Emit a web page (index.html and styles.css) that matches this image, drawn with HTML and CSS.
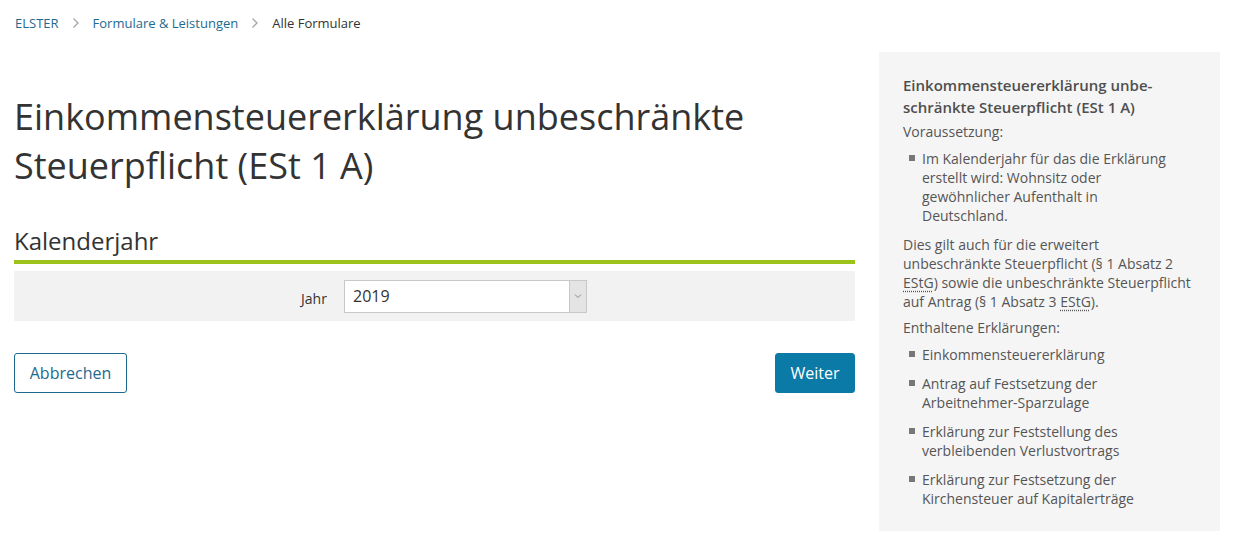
FILE: index.html
```html
<!DOCTYPE html>
<html lang="de">
<head>
<meta charset="utf-8">
<title>Einkommensteuererklärung unbeschränkte Steuerpflicht (ESt 1 A)</title>
<link rel="stylesheet" href="styles.css">
</head>
<body>
<div class="page">
  <nav class="breadcrumb">
    <a href="#" class="crumb-link">ELSTER</a>
    <span class="sep"><svg width="8" height="12" viewBox="0 0 8 12"><path d="M1.5 1.5 L6 6 L1.5 10.5" fill="none" stroke="#a6a6a6" stroke-width="1.3"/></svg></span>
    <a href="#" class="crumb-link">Formulare &amp; Leistungen</a>
    <span class="sep"><svg width="8" height="12" viewBox="0 0 8 12"><path d="M1.5 1.5 L6 6 L1.5 10.5" fill="none" stroke="#a6a6a6" stroke-width="1.3"/></svg></span>
    <span class="crumb-current">Alle Formulare</span>
  </nav>
  <div class="layout">
    <main class="main">
      <h1 class="title">Einkommensteuererklärung unbeschränkte Steuerpflicht (ESt 1 A)</h1>
      <h2 class="section-title">Kalenderjahr</h2>
      <div class="field-row">
        <label class="field-label">Jahr</label>
        <div class="select">
          <span class="select-value">2019</span>
          <span class="select-arrow"><svg width="8" height="6" viewBox="0 0 8 6"><path d="M1 1.5 L4 4.5 L7 1.5" fill="none" stroke="#8a8a8a" stroke-width="1"/></svg></span>
        </div>
      </div>
      <div class="actions">
        <button class="btn btn-secondary">Abbrechen</button>
        <button class="btn btn-primary">Weiter</button>
      </div>
    </main>
    <aside class="sidebar">
      <h3 class="side-title">Einkommensteuererklärung unbe&shy;schränkte Steuerpflicht (ESt 1 A)</h3>
      <p class="side-text">Voraussetzung:</p>
      <ul class="side-list">
        <li>Im Kalenderjahr für das die Erklärung erstellt wird: Wohnsitz oder gewöhnlicher Aufenthalt in Deutschland.</li>
      </ul>
      <p class="side-text para">Dies gilt auch für die erweitert unbeschränkte Steuerpflicht (§ 1 Absatz 2 <abbr>EStG</abbr>) sowie die unbeschränkte Steuerpflicht auf Antrag (§ 1 Absatz 3 <abbr>EStG</abbr>).</p>
      <p class="side-text">Enthaltene Erklärungen:</p>
      <ul class="side-list">
        <li>Einkommensteuererklärung</li>
        <li>Antrag auf Festsetzung der Arbeitnehmer-Sparzulage</li>
        <li>Erklärung zur Feststellung des verbleibenden Verlustvortrags</li>
        <li>Erklärung zur Festsetzung der Kirchensteuer auf Kapitalerträge</li>
      </ul>
    </aside>
  </div>
</div>
</body>
</html>
```

FILE: styles.css
```css
* { box-sizing: border-box; }
html, body { margin: 0; padding: 0; background: #fff; }
body {
  font-family: "Open Sans", "Liberation Sans", sans-serif;
  color: #333;
}
.page { padding: 0 16px 0 14px; }

.breadcrumb {
  display: flex;
  align-items: center;
  height: 46px;
  font-size: 13px;
  padding-left: 1px;
}
.crumb-link { color: #1e6a8f; text-decoration: none; }
.crumb-current { color: #333; }
.sep { display: inline-flex; margin: 0 13px 0 13px; }

.layout {
  display: grid;
  grid-template-columns: 841px 341px;
  column-gap: 24px;
  align-items: start;
}

.title {
  font-size: 36px;
  font-weight: 400;
  line-height: 49px;
  margin: 46px 0 0;
  color: #333;
}
.section-title {
  font-size: 24px;
  font-weight: 400;
  margin: 35px 0 0;
  line-height: 32px;
  padding-bottom: 3px;
  border-bottom: 4px solid #9bc31c;
  color: #333;
}
.field-row {
  margin-top: 7px;
  background: #f2f2f2;
  height: 50px;
  display: flex;
  align-items: center;
  padding-left: 287px;
}
.field-label { font-size: 14px; width: 43px; padding-top: 4px; color: #333; }
.select {
  width: 243px;
  height: 33px;
  background: #fff;
  border: 1px solid #c8c8c8;
  display: flex;
  align-items: stretch;
}
.select-value { flex: 1; font-size: 16px; padding: 4px 0 0 8px; color: #333; }
.select-arrow {
  width: 17px;
  background: #e4e4e4;
  border-left: 1px solid #c8c8c8;
  display: flex;
  align-items: center;
  justify-content: center;
}

.actions {
  display: flex;
  justify-content: space-between;
  margin-top: 32px;
}
.btn {
  font-family: inherit;
  font-size: 16px;
  height: 40px;
  border-radius: 3px;
  padding: 0 14px;
  cursor: pointer;
}
.btn-secondary { background: #fff; color: #1e6a8f; border: 1px solid #1e6a8f; width: 113px; }
.btn-primary { background: #0b7aa6; color: #fff; border: 1px solid #0b7aa6; width: 80px; }

.sidebar {
  background: #f5f5f5;
  margin-top: 6px;
  padding: 22px 24px 20px;
  height: 479px;
  color: #555;
  font-size: 14px;
}
.side-title {
  font-size: 15px;
  font-weight: 600;
  line-height: 22px;
  margin: 0 0 4px;
  color: #4f4f4f;
  hyphens: manual;
}
.side-text { margin: 0; line-height: 19px; }
.side-text.para { margin: 10px 0 7px; }
.side-list {
  list-style: none;
  margin: 8px 0 0;
  padding: 0 24px 0 19px;
}
.side-list li {
  position: relative;
  line-height: 19px;
  margin-bottom: 10px;
}
.side-list li::before {
  content: "";
  position: absolute;
  left: -13px;
  top: 6px;
  width: 6px;
  height: 6px;
  background: #777;
}
abbr {
  text-decoration-line: underline;
  text-decoration-style: dotted;
  text-decoration-color: #555;
  text-underline-offset: 3px;
}
```
